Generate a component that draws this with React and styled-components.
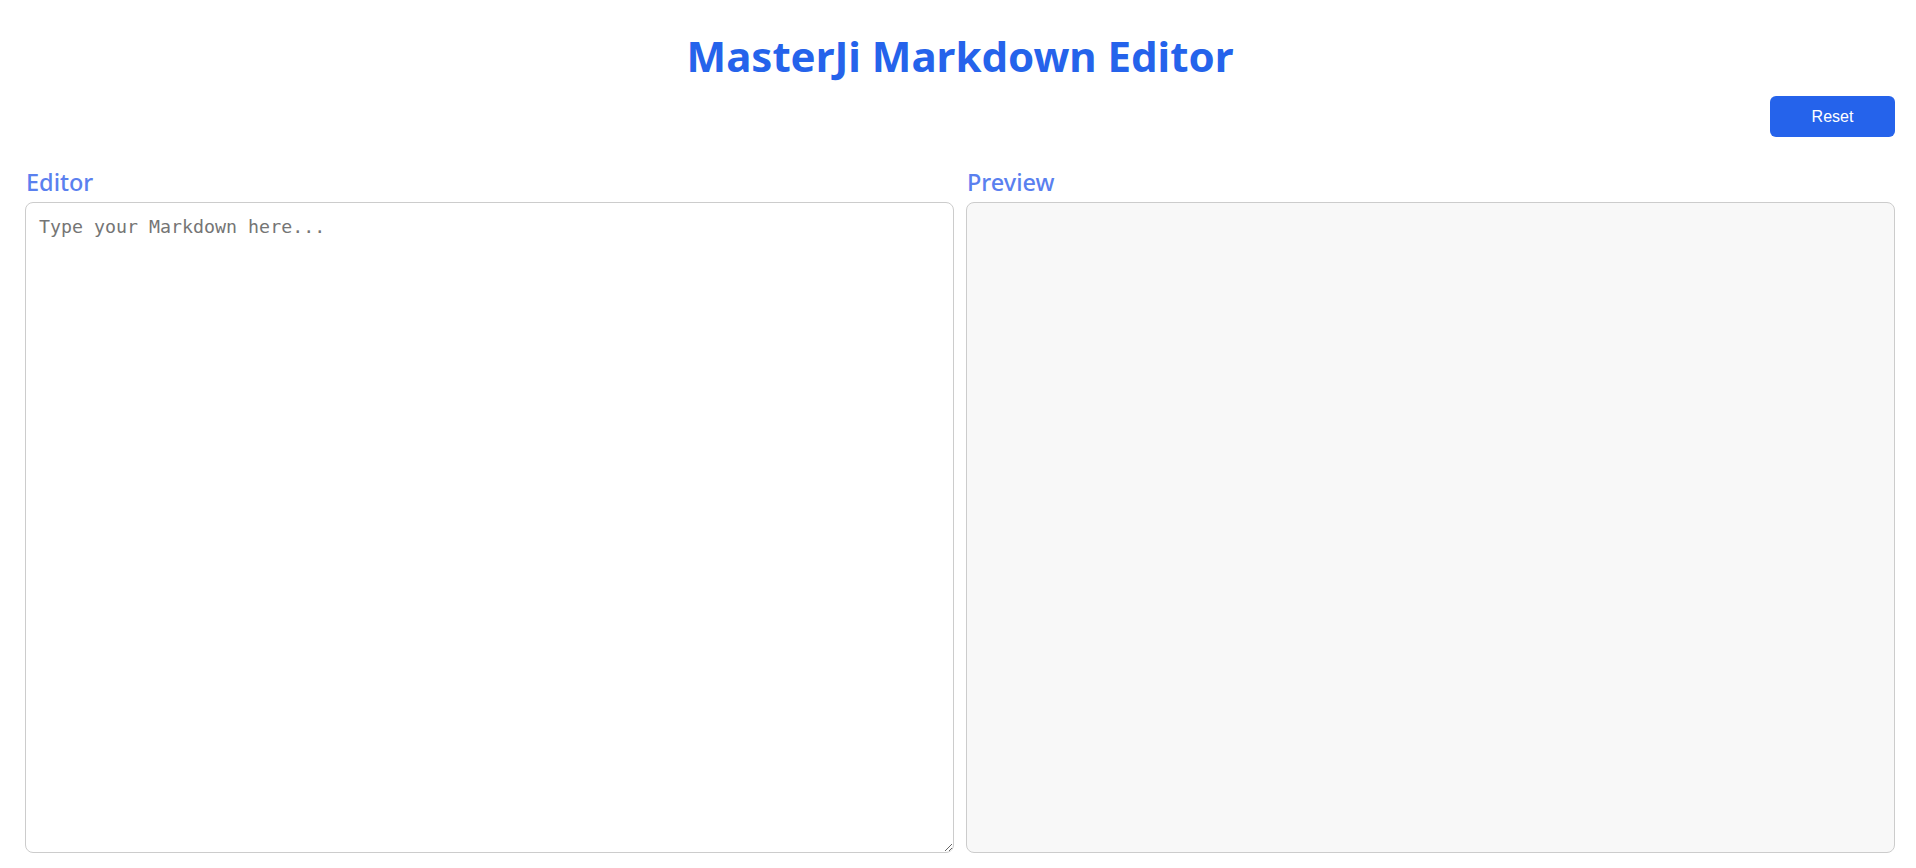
import React, { useState } from "react";
import styled, { createGlobalStyle } from "styled-components";

const GlobalStyle = createGlobalStyle`
  html, body {
    margin: 0;
    padding: 0;
    background: #ffffff;
  }
  body {
    font-family: "Noto Sans", "Open Sans", sans-serif;
  }
  * { box-sizing: border-box; }
`;

const Page = styled.div`
  padding: 30px 21px 0 25px;
  height: 868px;
  display: flex;
  flex-direction: column;
`;

const Title = styled.h1`
  margin: 0;
  text-align: center;
  font-family: "Noto Sans", sans-serif;
  font-weight: 700;
  font-size: 42px;
  line-height: 52px;
  color: #2563eb;
`;

const Toolbar = styled.div`
  display: flex;
  justify-content: flex-end;
  margin-top: 14px;
`;

const ResetButton = styled.button`
  width: 125px;
  height: 41px;
  border: none;
  border-radius: 6px;
  background: #2563eb;
  color: #ffffff;
  font-family: "Liberation Sans", Arial, sans-serif;
  font-size: 16px;
  cursor: pointer;
`;

const Panels = styled.div`
  display: grid;
  grid-template-columns: 1fr 1fr;
  column-gap: 12px;
  margin-top: 31px;
`;

const Panel = styled.section`
  display: flex;
  flex-direction: column;
  min-width: 0;
`;

const PanelLabel = styled.h2`
  margin: 0 0 6px 1px;
  font-family: "Noto Sans", sans-serif;
  font-weight: 500;
  font-size: 23.5px;
  line-height: 28px;
  color: #5a80ef;
`;

const EditorArea = styled.textarea`
  width: 100%;
  height: 651px;
  border: 1px solid #cccccc;
  border-radius: 8px;
  padding: 13px 13px;
  font-family: "DejaVu Sans Mono", monospace;
  font-size: 18.3px;
  line-height: 21px;
  color: #222;
  background: #ffffff;
  outline: none;
  &::placeholder {
    color: #757575;
  }
`;

const PreviewBox = styled.div`
  height: 651px;
  border: 1px solid #cccccc;
  border-radius: 8px;
  background: #f8f8f8;
  padding: 14px;
  overflow: auto;
`;

export default function App() {
  const [text, setText] = useState("");
  return (
    <>
      <GlobalStyle />
      <Page>
        <Title>MasterJi Markdown Editor</Title>
        <Toolbar>
          <ResetButton onClick={() => setText("")}>Reset</ResetButton>
        </Toolbar>
        <Panels>
          <Panel>
            <PanelLabel>Editor</PanelLabel>
            <EditorArea
              value={text}
              onChange={(e) => setText(e.target.value)}
              placeholder="Type your Markdown here..."
            />
          </Panel>
          <Panel>
            <PanelLabel>Preview</PanelLabel>
            <PreviewBox>{text}</PreviewBox>
          </Panel>
        </Panels>
      </Page>
    </>
  );
}
